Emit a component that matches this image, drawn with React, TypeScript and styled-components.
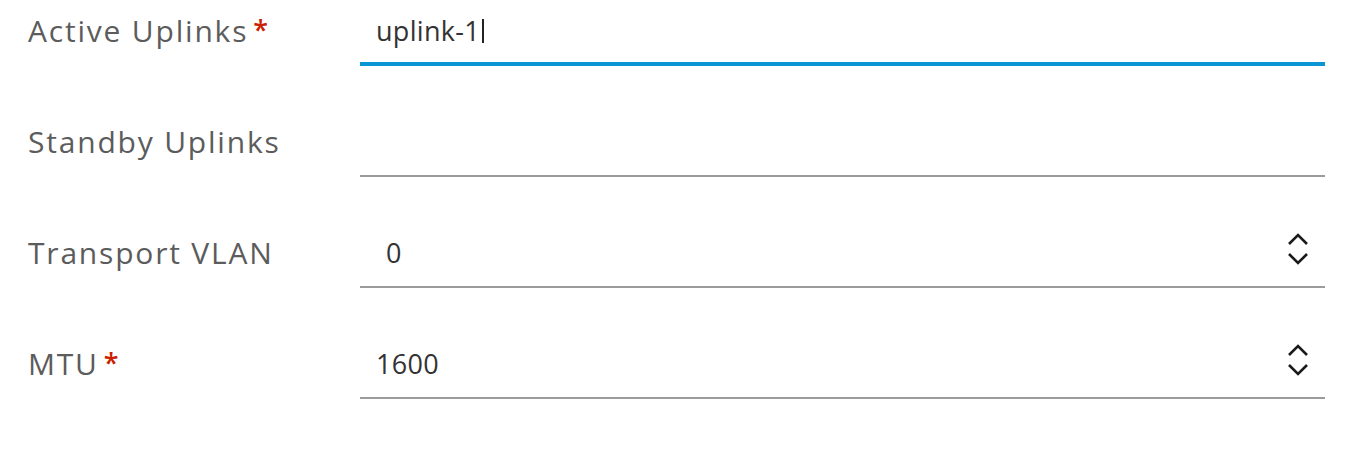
import styled, { createGlobalStyle } from 'styled-components';

const GlobalStyle = createGlobalStyle`
  html, body {
    margin: 0;
    padding: 0;
    background: #ffffff;
  }
  body {
    font-family: 'Open Sans', 'Noto Sans', sans-serif;
  }
`;

type Field = {
  label: string;
  required?: boolean;
  value?: string;
  focused?: boolean;
  numeric?: boolean;
  indent?: number;
};

const fields: Field[] = [
  { label: 'Active Uplinks', required: true, value: 'uplink-1', focused: true },
  { label: 'Standby Uplinks' },
  { label: 'Transport VLAN', value: '0', numeric: true, indent: 26 },
  { label: 'MTU', required: true, value: '1600', numeric: true },
];

const Form = styled.div`
  display: flex;
  flex-direction: column;
  padding: 0 23px 0 28px;
`;

const Row = styled.div`
  display: flex;
  align-items: flex-start;
  height: 111px;
`;

const Label = styled.div`
  width: 332px;
  flex-shrink: 0;
  height: 64px;
  box-sizing: border-box;
  padding-bottom: 4px;
  display: flex;
  align-items: center;
  font-size: 30px;
  letter-spacing: 1.8px;
  color: #5c5c5c;
`;

const Star = styled.span`
  color: #c92100;
  margin-left: 5px;
  font-size: 27px;
  font-weight: 600;
  line-height: 1;
  align-self: flex-start;
  margin-top: 16px;
`;

const Control = styled.div<{ $focused?: boolean }>`
  flex: 1;
  height: 66px;
  box-sizing: border-box;
  display: flex;
  align-items: flex-start;
  border-bottom: ${(p) => (p.$focused ? '4px solid #0a95d5' : '2px solid #9b9b9b')};
`;

const Value = styled.div<{ $indent: number }>`
  height: 64px;
  box-sizing: border-box;
  padding-bottom: 3px;
  display: flex;
  align-items: center;
  padding-left: ${(p) => p.$indent}px;
  font-size: 27px;
  letter-spacing: 0.3px;
  color: #333333;
`;

const Caret = styled.span`
  display: inline-block;
  width: 2px;
  height: 24px;
  margin-left: 2px;
  background: #222222;
`;

const Spinner = styled.div`
  margin-left: auto;
  margin-right: 16px;
  height: 64px;
  box-sizing: border-box;
  padding-bottom: 10px;
  display: flex;
  align-items: center;
`;

const SpinIcon = () => (
  <svg width="22" height="36" viewBox="0 0 22 36" fill="none">
    <path d="M2 13 L11 4 L20 13" stroke="#1a1a1a" strokeWidth="2.6" />
    <path d="M2 23 L11 32 L20 23" stroke="#1a1a1a" strokeWidth="2.6" />
  </svg>
);

export default function App() {
  return (
    <>
      <GlobalStyle />
      <Form>
        {fields.map((f) => (
          <Row key={f.label}>
            <Label>
              {f.label}
              {f.required && <Star>*</Star>}
            </Label>
            <Control $focused={f.focused}>
              {f.value && (
                <Value $indent={f.indent ?? 16}>
                  {f.value}
                  {f.focused && <Caret />}
                </Value>
              )}
              {f.numeric && (
                <Spinner>
                  <SpinIcon />
                </Spinner>
              )}
            </Control>
          </Row>
        ))}
      </Form>
    </>
  );
}
